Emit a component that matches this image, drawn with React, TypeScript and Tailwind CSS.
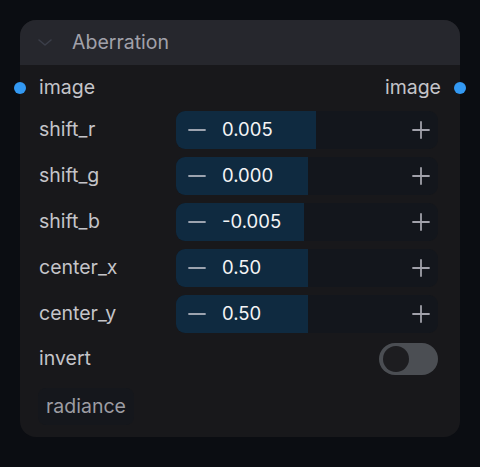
import React from 'react'

const FONT = { fontFamily: 'Inter, "Noto Sans", sans-serif' }

type NumRow = { label: string; value: string; fill: number }

const ROWS: NumRow[] = [
  { label: 'shift_r', value: '0.005', fill: 140 },
  { label: 'shift_g', value: '0.000', fill: 132 },
  { label: 'shift_b', value: '-0.005', fill: 128 },
  { label: 'center_x', value: '0.50', fill: 132 },
  { label: 'center_y', value: '0.50', fill: 132 },
]

function NumberWidget({ value, fill }: { value: string; fill: number }) {
  return (
    <div className="relative h-[38px] w-[262px] overflow-hidden rounded-[9px] bg-[#13161c]">
      <div className="absolute inset-y-0 left-0 bg-[#0f2a40]" style={{ width: fill }} />
      <div className="relative flex h-full items-center">
        <svg viewBox="0 0 18 18" className="ml-[12px] h-[18px] w-[18px]" stroke="#9ca3af" strokeWidth="1.8" strokeLinecap="round">
          <path d="M1 9h16" />
        </svg>
        <span className="ml-[16px] text-[18.5px] text-[#f4f4f5]">{value}</span>
        <svg viewBox="0 0 18 18" className="ml-auto mr-[8px] h-[18px] w-[18px]" stroke="#a1a1aa" strokeWidth="1.8" strokeLinecap="round">
          <path d="M1 9h16M9 1v16" />
        </svg>
      </div>
    </div>
  )
}

export default function App() {
  return (
    <div className="flex h-[467px] w-[480px] items-start bg-[#0b0d12] pl-[20px] pt-[20px]" style={FONT}>
      <div className="w-[440px] rounded-[16px] bg-[#18181b] text-[19.5px] text-[#c4c4c9]">
        {/* header */}
        <div className="flex h-[45px] items-center rounded-t-[16px] bg-[#26272d]">
          <svg viewBox="0 0 16 10" className="ml-[17px] h-[10px] w-[16px]" fill="none" stroke="#3b3e49" strokeWidth="1.6" strokeLinecap="round" strokeLinejoin="round">
            <path d="M2 2l6 5 6-5" />
          </svg>
          <span className="ml-[19px] text-[#a1a1aa]">Aberration</span>
        </div>

        {/* io row */}
        <div className="relative flex h-[46px] items-center px-[19px]">
          <span className="absolute left-[-6px] top-[17px] h-[12px] w-[12px] rounded-full bg-[#3399f3]" />
          <span>image</span>
          <span className="ml-auto">image</span>
          <span className="absolute right-[-6px] top-[17px] h-[12px] w-[12px] rounded-full bg-[#3399f3]" />
        </div>

        <div className="flex flex-col gap-[8px]">
          {ROWS.map(r => (
            <div key={r.label} className="flex h-[38px] items-center pl-[19px]">
              <span className="w-[137px]">{r.label}</span>
              <NumberWidget value={r.value} fill={r.fill} />
            </div>
          ))}

          {/* toggle */}
          <div className="flex h-[36px] items-center pl-[19px] pr-[22px]">
            <span>invert</span>
            <div className="ml-auto flex h-[32px] w-[59px] items-center rounded-full bg-[#4b4e53] pl-[4px]">
              <div className="h-[26px] w-[26px] rounded-full bg-[#1d1d20]" />
            </div>
          </div>
        </div>

        <div className="px-[18px] pb-[12px] pt-[11px]">
          <span className="inline-flex h-[37px] items-center rounded-[8px] bg-[#15171c] px-[8px] text-[#9d9da3]">radiance</span>
        </div>
      </div>
    </div>
  )
}
